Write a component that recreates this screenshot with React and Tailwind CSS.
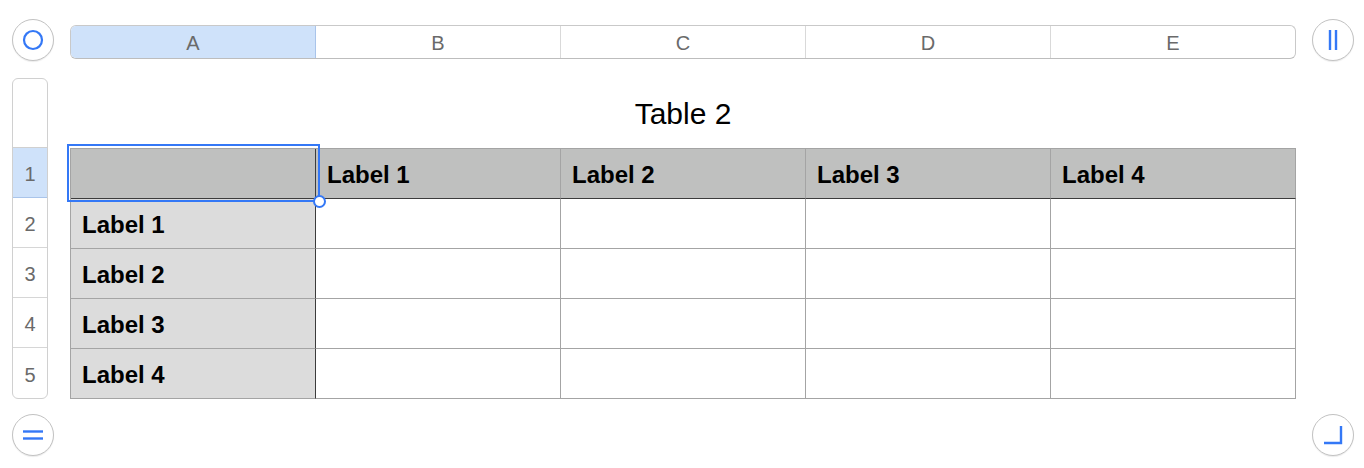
import React from 'react';

const COLS = ['A', 'B', 'C', 'D', 'E'];
const BLUE = '#3478f6';

function RoundButton({ children }) {
  return (
    <div className="w-[42px] h-[42px] rounded-full border border-[#c2c2c2] bg-white shadow-[0_1px_1px_rgba(0,0,0,0.08)] flex items-center justify-center shrink-0">
      {children}
    </div>
  );
}

export default function App() {
  const rows = [
    ['', 'Label 1', 'Label 2', 'Label 3', 'Label 4'],
    ['Label 1', '', '', '', ''],
    ['Label 2', '', '', '', ''],
    ['Label 3', '', '', '', ''],
    ['Label 4', '', '', '', ''],
  ];

  return (
    <div className="w-[1364px] h-[468px] bg-white pl-[12px] pt-[19px] font-['Liberation_Sans',Arial,sans-serif]">
      {/* Top: column letters */}
      <div className="flex items-start h-[42px]">
        <RoundButton>
          <svg width="22" height="22" viewBox="0 0 22 22">
            <circle cx="11" cy="11" r="9" fill="none" stroke={BLUE} strokeWidth="2.2" />
          </svg>
        </RoundButton>
        <div className="ml-[16px] mt-[6px] w-[1226px] h-[34px] shrink-0 rounded-[6px] border border-[#c9c9c9] border-b-[#bdbdbd] bg-white flex overflow-hidden">
          {COLS.map((c, i) => (
            <div
              key={c}
              className={
                'flex-1 flex items-center justify-center pt-[1px] text-[20px] text-[#6a6a6a] ' +
                (i === 0 ? 'bg-[#cfe2fa] border-r border-[#a9c4ea]' : i < 4 ? 'border-r border-[#d9d9d9]' : '')
              }
            >
              {c}
            </div>
          ))}
        </div>
        <div className="ml-[16px] shrink-0">
          <RoundButton>
            <svg width="14" height="22" viewBox="0 0 14 22">
              <line x1="4" y1="1" x2="4" y2="21" stroke={BLUE} strokeWidth="2.4" />
              <line x1="10" y1="1" x2="10" y2="21" stroke={BLUE} strokeWidth="2.4" />
            </svg>
          </RoundButton>
        </div>
      </div>

      {/* Middle: row numbers + table */}
      <div className="flex mt-[17px]">
        <div className="w-[36px] shrink-0 rounded-[6px] border border-[#d0d0d0] flex flex-col overflow-hidden">
          <div className="h-[69px] border-b border-[#d0d0d0]" />
          {[1, 2, 3, 4, 5].map((n) => (
            <div
              key={n}
              className={
                'h-[50px] flex items-center justify-center pt-[3px] text-[20px] text-[#6a6a6a] ' +
                (n === 1 ? 'bg-[#cfe2fa] border-b border-[#a9c4ea]' : n < 5 ? 'border-b border-[#d6d6d6]' : '')
              }
            >
              {n}
            </div>
          ))}
        </div>

        <div className="ml-[22px] w-[1226px] shrink-0 flex flex-col">
          <div className="h-[70px] flex items-center justify-center text-[30px] text-black">Table 2</div>
          <div className="relative border-t border-l border-[#a4a4a4]">
            {rows.map((r, ri) => (
              <div key={ri} className="flex">
                {r.map((cell, ci) => {
                  let bg = 'bg-white';
                  if (ri === 0) bg = 'bg-[#bfc0bf]';
                  else if (ci === 0) bg = 'bg-[#dcdcdc]';
                  const bb = ri === 0 ? 'border-b-[#3c3c3c]' : 'border-b-[#a4a4a4]';
                  const br = ci === 0 ? 'border-r-[#3c3c3c]' : 'border-r-[#a4a4a4]';
                  return (
                    <div
                      key={ci}
                      className={`w-[245px] h-[50px] border-b border-r ${bb} ${br} ${bg} flex items-center pl-[11px] pt-[3px] text-[24px] font-bold text-black`}
                    >
                      {cell}
                    </div>
                  );
                })}
              </div>
            ))}
            {/* selection */}
            <div className="absolute left-[-4px] top-[-5px] w-[253px] h-[58px] border-2 border-[#3478f6] pointer-events-none">
              <div className="absolute right-[-8px] bottom-[-8px] w-[13px] h-[13px] rounded-full bg-white border-2 border-[#3478f6]" />
            </div>
          </div>
        </div>
      </div>

      {/* Bottom buttons */}
      <div className="flex justify-between mt-[15px] w-[1342px]">
        <RoundButton>
          <svg width="22" height="12" viewBox="0 0 22 12">
            <line x1="1" y1="2.5" x2="21" y2="2.5" stroke={BLUE} strokeWidth="2.4" />
            <line x1="1" y1="9.5" x2="21" y2="9.5" stroke={BLUE} strokeWidth="2.4" />
          </svg>
        </RoundButton>
        <RoundButton>
          <svg width="22" height="22" viewBox="0 0 22 22">
            <polyline points="2,19 19,19 19,2" fill="none" stroke={BLUE} strokeWidth="2.4" />
          </svg>
        </RoundButton>
      </div>
    </div>
  );
}
